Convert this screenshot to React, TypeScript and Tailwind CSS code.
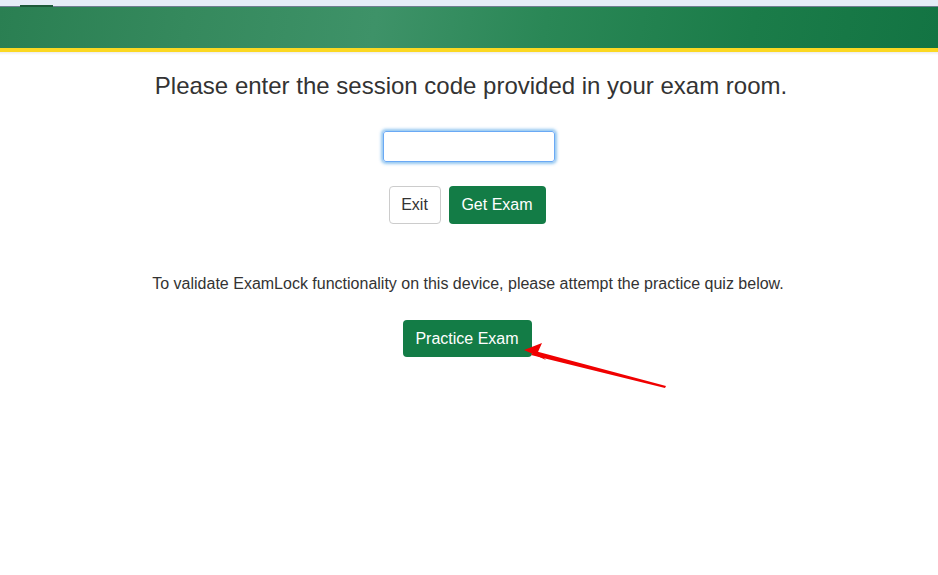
import React from "react";

export default function App() {
  return (
    <div
      className="w-[938px] h-[575px] bg-white overflow-hidden relative"
      style={{ fontFamily: '"Liberation Sans", Arial, sans-serif' }}
    >
      <div className="h-[6px] bg-[#e5edf7] relative">
        <div className="absolute left-[20px] top-[5px] w-[33px] h-[2px] bg-[#1d5a3a]" />
      </div>
      <div className="h-[1px] bg-[#6f7d90]" />
      <div className="h-[41px] bg-[linear-gradient(100deg,#2a7f52_0%,#35895d_20%,#3e9268_40%,#2a8756_58%,#1b7c49_80%,#137443_100%)]" />
      <div className="h-[4px] bg-[#fbd822]" />
      <div className="h-[3px] bg-[linear-gradient(to_bottom,#ececec,#ffffff)]" />

      <div className="flex flex-col items-center pr-[4px]">
        <h1 className="mt-[16px] ml-[8px] text-[24px] leading-[30px] text-[#333333]">
          Please enter the session code provided in your exam room.
        </h1>
        <input
          type="text"
          className="mt-[30px] ml-[4px] w-[172px] h-[31px] rounded-[3px] border border-[#6aa9f5] shadow-[0_0_3px_2px_rgba(102,175,233,0.7)] outline-none"
        />
        <div className="mt-[24px] flex gap-[8px]">
          <button className="h-[38px] w-[52px] rounded-[4px] border border-[#cccccc] bg-white text-[16px] text-[#333333]">
            Exit
          </button>
          <button className="h-[38px] w-[97px] rounded-[4px] bg-[#137c46] text-[16px] text-white">
            Get Exam
          </button>
        </div>
        <p className="mt-[50px] ml-[2px] text-[16px] leading-[20px] text-[#333333]">
          To validate ExamLock functionality on this device, please attempt the practice quiz below.
        </p>
        <button className="mt-[26px] h-[37px] w-[129px] rounded-[4px] bg-[#137c46] text-[16px] text-white">
          Practice Exam
        </button>
      </div>

      <svg
        className="absolute left-0 top-0 pointer-events-none"
        width="938"
        height="575"
        viewBox="0 0 938 575"
      >
        <polygon points="666,386 535,351 531,355 665,388" fill="#f00000" />
        <polygon points="524,350 542,343 538,352 546,360" fill="#f00000" />
      </svg>
    </div>
  );
}
